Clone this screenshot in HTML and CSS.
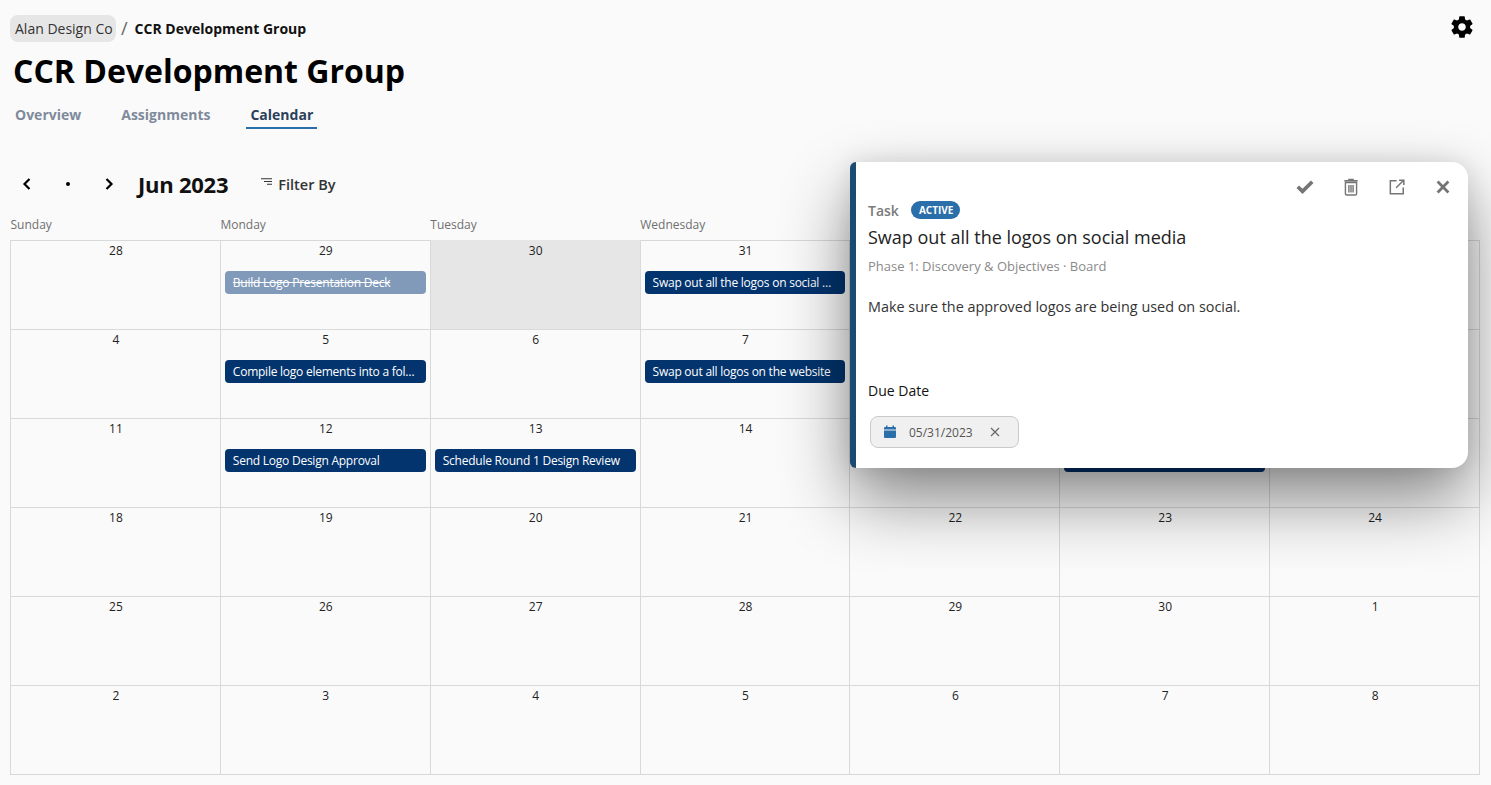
FILE: index.html
```html
<!DOCTYPE html>
<html lang="en">
<head>
<meta charset="utf-8">
<title>CCR Development Group</title>
<link rel="stylesheet" href="styles.css">
</head>
<body>
<div class="page">
  <header class="top">
    <nav class="crumbs">
      <a class="crumb-link">Alan Design Co</a>
      <span class="crumb-sep">/</span>
      <span class="crumb-current">CCR Development Group</span>
    </nav>
    <svg class="gear" viewBox="0 0 24 24"><path fill="#000" d="M19.43 12.98c.04-.32.07-.64.07-.98s-.03-.66-.07-.98l2.11-1.65c.19-.15.24-.42.12-.64l-2-3.46c-.12-.22-.39-.3-.61-.22l-2.49 1c-.52-.4-1.08-.73-1.69-.98l-.38-2.65C14.46 2.18 14.25 2 14 2h-4c-.25 0-.46.18-.49.42l-.38 2.65c-.61.25-1.17.59-1.69.98l-2.49-1c-.23-.09-.49 0-.61.22l-2 3.46c-.13.22-.07.49.12.64l2.11 1.65c-.04.32-.07.65-.07.98s.03.66.07.98l-2.11 1.65c-.19.15-.24.42-.12.64l2 3.46c.12.22.39.3.61.22l2.49-1c.52.4 1.08.73 1.69.98l.38 2.65c.03.24.24.42.49.42h4c.25 0 .46-.18.49-.42l.38-2.65c.61-.25 1.17-.59 1.69-.98l2.49 1c.23.09.49 0 .61-.22l2-3.46c.12-.22.07-.49-.12-.64l-2.11-1.65zM12 15.5c-1.93 0-3.5-1.57-3.5-3.5s1.57-3.5 3.5-3.5 3.5 1.57 3.5 3.5-1.57 3.5-3.5 3.5z"/></svg>
  </header>
  <h1 class="title">CCR Development Group</h1>
  <div class="tabs">
    <span class="tab">Overview</span>
    <span class="tab">Assignments</span>
    <span class="tab active">Calendar</span>
  </div>
  <div class="toolbar">
    <svg class="nav-icon" viewBox="0 0 14 14"><path d="M9.5 2 4.5 7l5 5" fill="none" stroke="#000" stroke-width="2.2"/></svg>
    <span class="nav-dot"></span>
    <svg class="nav-icon next" viewBox="0 0 14 14"><path d="M4.5 2l5 5-5 5" fill="none" stroke="#000" stroke-width="2.2"/></svg>
    <span class="month">Jun 2023</span>
    <span class="filter">
      <svg class="filter-icon" viewBox="0 0 12 8"><path d="M0 .75h11M3 3.5h8M6 6.25h5" fill="none" stroke="#333" stroke-width="1"/></svg>
      Filter By
    </span>
  </div>
  <div class="weekdays">
    <span>Sunday</span><span>Monday</span><span>Tuesday</span><span>Wednesday</span><span></span><span></span><span></span>
  </div>
  <div class="grid">
    <div class="cell"><span class="num">28</span></div>
    <div class="cell"><span class="num">29</span><div class="event done">Build Logo Presentation Deck</div></div>
    <div class="cell today"><span class="num">30</span></div>
    <div class="cell"><span class="num">31</span><div class="event">Swap out all the logos on social media</div></div>
    <div class="cell"></div>
    <div class="cell"></div>
    <div class="cell"></div>

    <div class="cell"><span class="num">4</span></div>
    <div class="cell"><span class="num">5</span><div class="event">Compile logo elements into a folder</div></div>
    <div class="cell"><span class="num">6</span></div>
    <div class="cell"><span class="num">7</span><div class="event">Swap out all logos on the website</div></div>
    <div class="cell"></div>
    <div class="cell"></div>
    <div class="cell"></div>

    <div class="cell"><span class="num">11</span></div>
    <div class="cell"><span class="num">12</span><div class="event">Send Logo Design Approval</div></div>
    <div class="cell"><span class="num">13</span><div class="event">Schedule Round 1 Design Review</div></div>
    <div class="cell"><span class="num">14</span></div>
    <div class="cell"></div>
    <div class="cell"><span class="num-gap"></span><div class="event"></div></div>
    <div class="cell"></div>

    <div class="cell"><span class="num">18</span></div>
    <div class="cell"><span class="num">19</span></div>
    <div class="cell"><span class="num">20</span></div>
    <div class="cell"><span class="num">21</span></div>
    <div class="cell"><span class="num">22</span></div>
    <div class="cell"><span class="num">23</span></div>
    <div class="cell"><span class="num">24</span></div>

    <div class="cell"><span class="num">25</span></div>
    <div class="cell"><span class="num">26</span></div>
    <div class="cell"><span class="num">27</span></div>
    <div class="cell"><span class="num">28</span></div>
    <div class="cell"><span class="num">29</span></div>
    <div class="cell"><span class="num">30</span></div>
    <div class="cell"><span class="num">1</span></div>

    <div class="cell"><span class="num">2</span></div>
    <div class="cell"><span class="num">3</span></div>
    <div class="cell"><span class="num">4</span></div>
    <div class="cell"><span class="num">5</span></div>
    <div class="cell"><span class="num">6</span></div>
    <div class="cell"><span class="num">7</span></div>
    <div class="cell"><span class="num">8</span></div>
  </div>
</div>

<aside class="popup">
  <div class="actions">
    <svg class="act" viewBox="0 0 24 24"><path fill="#757575" d="M9 20.400 1.800 13.200l3.100-3.100L9 14.200 19.100 4.100l3.100 3.100z"/></svg>
    <svg class="act" viewBox="0 0 24 24"><path fill="none" stroke="#757575" stroke-width="1.700" d="M5.300 6.500h13.400V20a1.500 1.500 0 0 1-1.500 1.500H6.800A1.500 1.500 0 0 1 5.300 20zM4 4.500h16M9.500 4.300V2.800h5v1.500M9.500 9.500v9M12 9.500v9M14.500 9.500v9"/></svg>
    <svg class="act" viewBox="0 0 24 24"><path fill="none" stroke="#757575" stroke-width="1.800" d="M11.500 4.500H4v15.500h15.500V12.500M14.500 3.800h5.700v5.700M20 4l-9 9"/></svg>
    <svg class="act" viewBox="0 0 24 24"><path fill="none" stroke="#757575" stroke-width="3.300" d="m5.500 5.500 13 13M18.500 5.500l-13 13"/></svg>
  </div>
  <div class="type-row">
    <span class="type">Task</span>
    <span class="badge">ACTIVE</span>
  </div>
  <h2 class="task-title">Swap out all the logos on social media</h2>
  <div class="task-path">Phase 1: Discovery &amp; Objectives · Board</div>
  <p class="task-desc">Make sure the approved logos are being used on social.</p>
  <div class="due-label">Due Date</div>
  <div class="due-chip">
    <svg class="cal" viewBox="0 0 14 14"><path fill="#2a6eaa" d="M3 .5h1.500V2h5V.5H11V2h1a1 1 0 0 1 1 1v1.500H1V3a1 1 0 0 1 1-1h1zM1 5.500h12V12a1 1 0 0 1-1 1H2a1 1 0 0 1-1-1z"/></svg>
    <span class="due-date">05/31/2023</span>
    <svg class="due-x" viewBox="0 0 10 10"><path d="m1 1 8 8M9 1 1 9" fill="none" stroke="#666" stroke-width="1.200"/></svg>
  </div>
</aside>
</body>
</html>
```

FILE: styles.css
```css
* { box-sizing: border-box; }
html, body { margin: 0; height: 100%; }
body {
  background: #fafafa;
  font-family: "Open Sans", "Liberation Sans", sans-serif;
  color: #111;
  overflow: hidden;
  position: relative;
}
.page { padding: 15px 11px 0 10px; }
.top { display: flex; align-items: center; height: 27px; }
.crumbs { display: flex; align-items: center; flex: 1; }
.crumb-link {
  background: #e6e6e6;
  border-radius: 8px;
  padding: 0 5px;
  height: 27px;
  line-height: 27px;
  font-size: 14px;
  color: #333;
  width: 106px;
  white-space: nowrap;
}
.crumb-sep { margin: 0 9px 0 5px; font-size: 18px; line-height: 27px; color: #666; }
.crumb-current { font-size: 14px; font-weight: 700; color: #111; margin-left: -2px; }
.gear { width: 26px; height: 26px; margin: -3px 5px 0 0; }
.title {
  margin: 9px 0 0 3px;
  font-size: 32px;
  line-height: 40px;
  font-weight: 700;
  color: #000;
}
.tabs { display: flex; margin: 13px 0 0 1px; height: 25px; }
.tab {
  font-size: 14px;
  font-weight: 700;
  color: #7f8a9c;
  line-height: 22px;
  padding: 0 4px;
  margin-right: 32px;
}
.tab.active {
  color: #2b3f5c;
  border-bottom: 2px solid #2a6eaa;
  padding: 0 4px;
}
.toolbar { display: flex; align-items: center; height: 40px; margin-top: 35px; }
.nav-icon { width: 14px; height: 14px; margin-left: 10px; }
.nav-dot { width: 4px; height: 4px; border-radius: 50%; background: #000; margin-left: 32px; }
.nav-icon.next { margin-left: 32px; }
.month { font-size: 22px; font-weight: 700; color: #111; margin-left: 22px; letter-spacing: -0.25px; }
.filter { display: flex; align-items: center; font-size: 14.5px; font-weight: 600; color: #333; margin-left: 33px; }
.filter-icon { width: 12px; height: 8px; margin-right: 5px; margin-top: -5px; }
.weekdays {
  display: grid;
  grid-template-columns: repeat(7, 1fr);
  height: 36px;
  padding: 12px 0 0 0.5px;
  font-size: 12px;
  font-weight: 400;
  color: #707070;
  line-height: 18px;
}
.grid {
  display: grid;
  grid-template-columns: repeat(7, 1fr);
  grid-auto-rows: 89px;
  border-top: 1px solid #d9d9d9;
  border-left: 1px solid #d9d9d9;
}
.cell {
  border-right: 1px solid #d9d9d9;
  border-bottom: 1px solid #d9d9d9;
  padding: 2px 4px 0 4px;
  text-align: center;
  min-width: 0;
  margin-top: -1px;
  height: 90px;
}
.cell.today { background: #e6e6e6; }
.num { display: block; font-size: 12px; line-height: 18px; color: #222; padding-left: 1px; }
.num-gap { display: block; height: 18px; }
.event {
  margin-top: 11px;
  height: 23px;
  line-height: 23px;
  background: #03346e;
  color: #fff;
  font-size: 12px;
  letter-spacing: -0.24px;
  text-align: left;
  border-radius: 4px;
  padding: 0 8px;
  white-space: nowrap;
  overflow: hidden;
  text-overflow: ellipsis;
}
.event.done { background: #819ab9; text-decoration: line-through; }

.popup {
  position: absolute;
  left: 850px;
  top: 162px;
  width: 618px;
  height: 306px;
  background: #fff;
  border-left: 6px solid #1b4a72;
  border-radius: 6px 16px 16px 6px;
  box-shadow: 0 32px 68px rgba(0, 0, 0, 0.46), 0 0 24px rgba(0, 0, 0, 0.1);
  padding: 0 12px;
}
.actions { display: flex; justify-content: flex-end; gap: 26px; padding: 15px 4px 0 0; height: 31px; margin-right: -1px; }
.act { width: 20px; height: 20px; flex: none; }
.type-row { display: flex; align-items: center; height: 18px; margin-top: 8px; }
.type { font-size: 14px; font-weight: 600; color: #7a7a7a; }
.badge {
  margin-left: 12px;
  background: #2a6eaa;
  color: #fff;
  font-size: 10px;
  font-weight: 700;
  height: 18px;
  line-height: 18px;
  border-radius: 9px;
  padding: 0 8px;
  width: 49px;
  text-align: center;
  white-space: nowrap;
}
.task-title { margin: 5px 0 0; font-size: 18px; font-weight: 400; line-height: 26px; color: #222; }
.task-path { margin-top: 7px; font-size: 13px; line-height: 18px; color: #8a8a8a; }
.task-desc { margin: 22px 0 0; font-size: 14.4px; line-height: 20px; color: #333; }
.due-label { margin-top: 64px; font-size: 14px; line-height: 20px; color: #111; }
.due-chip {
  display: flex;
  align-items: center;
  margin: 15px 0 0 2px;
  width: 149px;
  height: 32px;
  background: #f0f0f0;
  border: 1px solid #c9c9c9;
  border-radius: 8px;
  padding: 0 0 0 12px;
}
.cal { width: 14px; height: 14px; }
.due-date { font-size: 12px; color: #555; margin-left: 12px; }
.due-x { width: 10px; height: 10px; margin-left: 17px; }
```
